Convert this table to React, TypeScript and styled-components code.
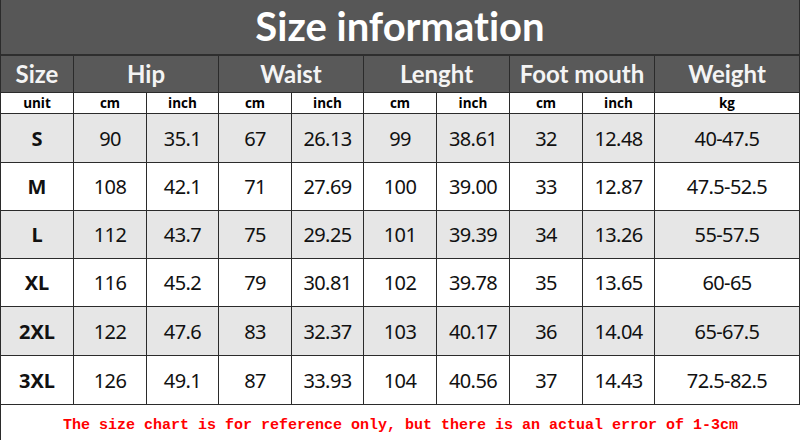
import React from "react";
import styled, { createGlobalStyle } from "styled-components";

const Global = createGlobalStyle`
  html, body { margin: 0; padding: 0; background: #ffffff; }
  body { width: 800px; height: 440px; overflow: hidden; }
`;

const Sheet = styled.div`
  width: 800px;
  height: 440px;
  box-sizing: border-box;
  border-left: 1px solid #2b2b2b;
  display: grid;
  grid-template-columns: 73px 73px 72px 73px 72px 73px 73px 73px 72px 145px;
  grid-template-rows: 56px 37px 21px 49px 48px 48px 48px 49px 49px 1fr;
  background: #ffffff;
`;

const Title = styled.div`
  grid-column: 1 / -1;
  background: #575757;
  border-bottom: 2px solid #2e2e2e;
  border-right: 1px solid #2b2b2b;
  display: flex;
  align-items: center;
  justify-content: center;
  color: #ffffff;
  font-family: Lato, "Open Sans", sans-serif;
  font-weight: 700;
  font-size: 40px;
  font-variant-ligatures: none;
  padding-bottom: 2px;
  box-sizing: border-box;
`;

const Cell = styled.div<{ $span?: number }>`
  grid-column: span ${(p) => p.$span ?? 1};
  box-sizing: border-box;
  border-right: 1px solid #2b2b2b;
  border-bottom: 1px solid #2b2b2b;
  display: flex;
  align-items: center;
  justify-content: center;
  white-space: nowrap;
`;

const HeadCell = styled(Cell)`
  background: #595959;
  color: #f4f4f4;
  font-family: Lato, "Open Sans", sans-serif;
  font-weight: 700;
  font-size: 24px;
  font-variant-ligatures: none;
  padding-bottom: 1px;
`;

const UnitCell = styled(Cell)`
  background: #ffffff;
  color: #000000;
  font-family: "Open Sans", "Noto Sans", sans-serif;
  font-weight: 700;
  font-size: 13.5px;
  padding-bottom: 1px;
`;

const DataCell = styled(Cell)<{ $shade: boolean; $bold?: boolean }>`
  background: ${(p) => (p.$shade ? "#e6e6e6" : "#ffffff")};
  color: #111111;
  font-family: "Noto Sans", "Open Sans", sans-serif;
  font-weight: ${(p) => (p.$bold ? 700 : 400)};
  font-size: 20px;
  letter-spacing: ${(p) => (p.$bold ? "0" : "-0.6px")};
`;

const Footer = styled.div`
  grid-column: 1 / -1;
  display: flex;
  align-items: center;
  justify-content: center;
  color: #ff0000;
  font-family: "Liberation Mono", "Courier New", monospace;
  font-weight: 700;
  font-size: 15px;
  padding-top: 6px;
`;

const groups = ["Hip", "Waist", "Lenght", "Foot mouth"];

const rows = [
  ["S", "90", "35.1", "67", "26.13", "99", "38.61", "32", "12.48", "40-47.5"],
  ["M", "108", "42.1", "71", "27.69", "100", "39.00", "33", "12.87", "47.5-52.5"],
  ["L", "112", "43.7", "75", "29.25", "101", "39.39", "34", "13.26", "55-57.5"],
  ["XL", "116", "45.2", "79", "30.81", "102", "39.78", "35", "13.65", "60-65"],
  ["2XL", "122", "47.6", "83", "32.37", "103", "40.17", "36", "14.04", "65-67.5"],
  ["3XL", "126", "49.1", "87", "33.93", "104", "40.56", "37", "14.43", "72.5-82.5"],
];

export default function App() {
  return (
    <>
      <Global />
      <Sheet>
        <Title>Size information</Title>
        <HeadCell>Size</HeadCell>
        {groups.map((g) => (
          <HeadCell key={g} $span={2}>
            {g}
          </HeadCell>
        ))}
        <HeadCell>Weight</HeadCell>
        <UnitCell>unit</UnitCell>
        {groups.map((g) => (
          <React.Fragment key={g}>
            <UnitCell>cm</UnitCell>
            <UnitCell>inch</UnitCell>
          </React.Fragment>
        ))}
        <UnitCell>kg</UnitCell>
        {rows.map((r, i) =>
          r.map((v, j) => (
            <DataCell key={`${i}-${j}`} $shade={i % 2 === 0} $bold={j === 0}>
              {v}
            </DataCell>
          ))
        )}
        <Footer>
          The size chart is for reference only, but there is an actual error of 1-3cm
        </Footer>
      </Sheet>
    </>
  );
}
